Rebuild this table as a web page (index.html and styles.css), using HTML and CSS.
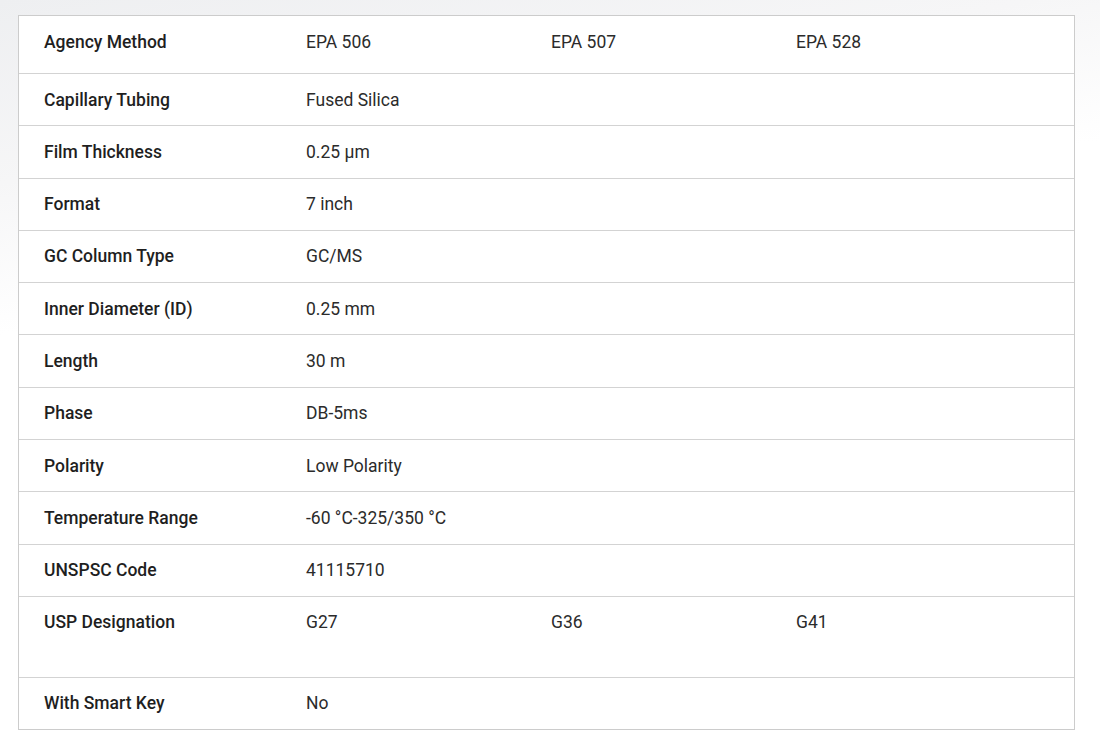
FILE: index.html
```html
<!DOCTYPE html>
<html lang="en">
<head>
<meta charset="utf-8">
<title>Specifications</title>
<link rel="stylesheet" href="styles.css">
</head>
<body>
<div class="page">
  <div class="spec-table">
    <div class="row row-first"><div class="label">Agency Method</div><div class="val">EPA 506</div><div class="val">EPA 507</div><div class="val">EPA 528</div></div>
    <div class="row"><div class="label">Capillary Tubing</div><div class="val">Fused Silica</div></div>
    <div class="row"><div class="label">Film Thickness</div><div class="val">0.25 µm</div></div>
    <div class="row"><div class="label">Format</div><div class="val">7 inch</div></div>
    <div class="row"><div class="label">GC Column Type</div><div class="val">GC/MS</div></div>
    <div class="row"><div class="label">Inner Diameter (ID)</div><div class="val">0.25 mm</div></div>
    <div class="row"><div class="label">Length</div><div class="val">30 m</div></div>
    <div class="row"><div class="label">Phase</div><div class="val">DB-5ms</div></div>
    <div class="row"><div class="label">Polarity</div><div class="val">Low Polarity</div></div>
    <div class="row"><div class="label">Temperature Range</div><div class="val">-60 °C-325/350 °C</div></div>
    <div class="row"><div class="label">UNSPSC Code</div><div class="val">41115710</div></div>
    <div class="row row-tall"><div class="label">USP Designation</div><div class="val">G27</div><div class="val">G36</div><div class="val">G41</div></div>
    <div class="row row-last"><div class="label">With Smart Key</div><div class="val">No</div></div>
  </div>
</div>
</body>
</html>
```
FILE: styles.css
```css
html, body {
  margin: 0;
  padding: 0;
}
body {
  background: linear-gradient(170deg, #eeeff1 0, #f6f6f7 180px, #ffffff 330px);
  min-height: 751px;
  font-family: Roboto, "Liberation Sans", Arial, sans-serif;
  font-size: 17.5px;
  color: #222;
}
.page {
  padding: 15px 0 0 18px;
}
.spec-table {
  width: 1055px;
  border: 1px solid #cccccc;
  background: #fff;
}
.row {
  box-sizing: border-box;
  display: grid;
  grid-template-columns: 262px 245px 245px 1fr;
  height: 52.3px;
  padding: 14.5px 0 0 25px;
  border-bottom: 1px solid #d3d3d3;
  line-height: 22px;
}
.row-first {
  height: 58px;
}
.row-tall {
  height: 81px;
}
.row-last {
  height: 51.3px;
  border-bottom: none;
}
.label {
  font-weight: 500;
  color: #1f1f1f;
}
.val {
  font-weight: 400;
  color: #2b2b2b;
}
```
